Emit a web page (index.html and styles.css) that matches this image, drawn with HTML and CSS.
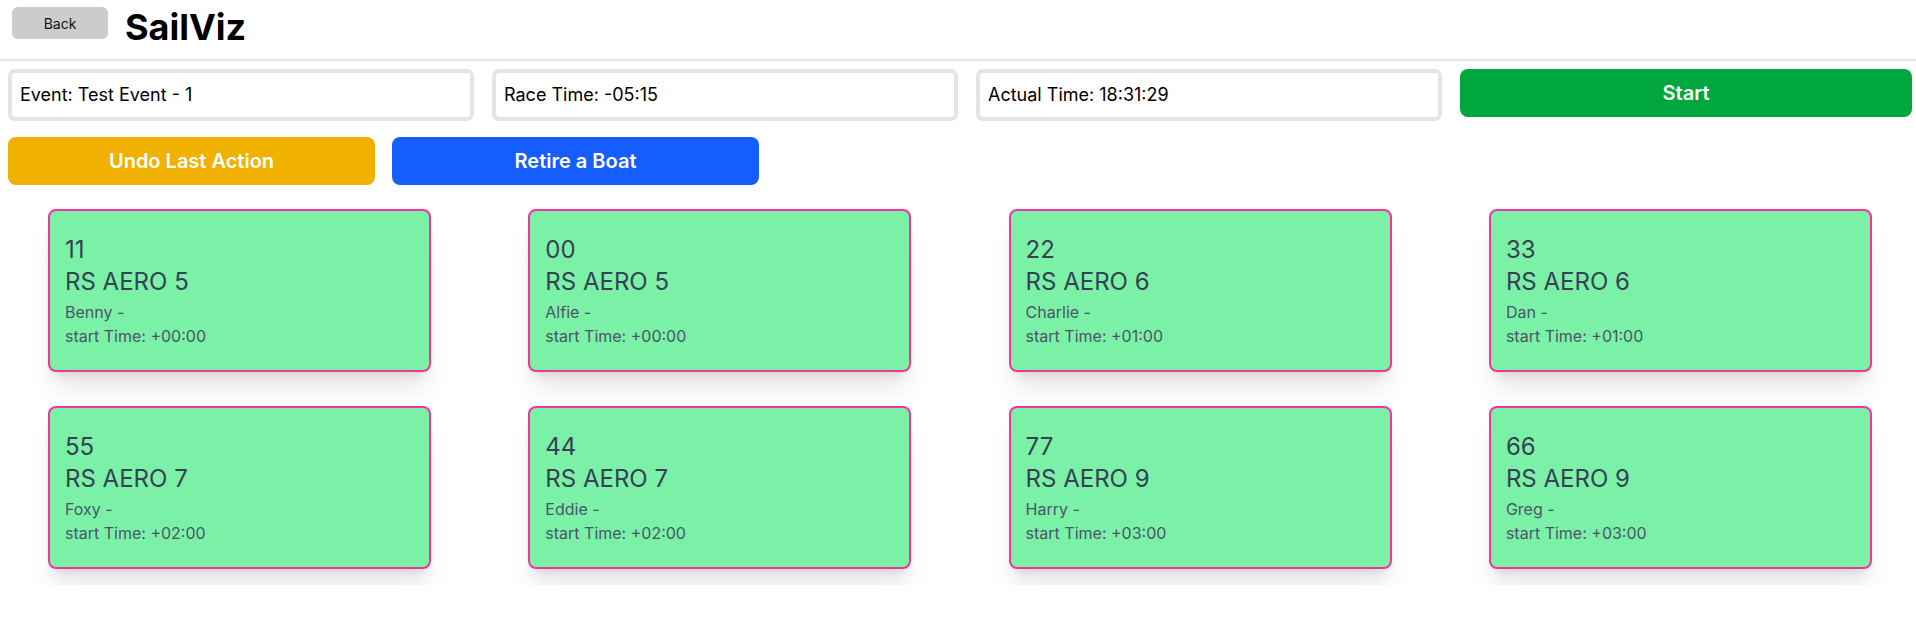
FILE: index.html
```html
<!DOCTYPE html>
<html lang="en">
<head>
<meta charset="utf-8">
<title>SailViz</title>
<link rel="stylesheet" href="styles.css">
</head>
<body>
<header class="topbar">
  <button class="back-btn">Back</button>
  <h1 class="brand">SailViz</h1>
</header>
<section class="info-row">
  <div class="info-box">Event: Test Event - 1</div>
  <div class="info-box">Race Time: -05:15</div>
  <div class="info-box">Actual Time: 18:31:29</div>
  <button class="btn btn-start">Start</button>
</section>
<section class="action-row">
  <button class="btn btn-undo">Undo Last Action</button>
  <button class="btn btn-retire">Retire a Boat</button>
</section>
<main class="boats">
  <div class="boat-grid">
    <div class="boat"><div class="sail">11</div><div class="cls">RS AERO 5</div><div class="helm">Benny -</div><div class="start">start Time: +00:00</div></div>
    <div class="boat"><div class="sail">00</div><div class="cls">RS AERO 5</div><div class="helm">Alfie -</div><div class="start">start Time: +00:00</div></div>
    <div class="boat"><div class="sail">22</div><div class="cls">RS AERO 6</div><div class="helm">Charlie -</div><div class="start">start Time: +01:00</div></div>
    <div class="boat"><div class="sail">33</div><div class="cls">RS AERO 6</div><div class="helm">Dan -</div><div class="start">start Time: +01:00</div></div>
    <div class="boat"><div class="sail">55</div><div class="cls">RS AERO 7</div><div class="helm">Foxy -</div><div class="start">start Time: +02:00</div></div>
    <div class="boat"><div class="sail">44</div><div class="cls">RS AERO 7</div><div class="helm">Eddie -</div><div class="start">start Time: +02:00</div></div>
    <div class="boat"><div class="sail">77</div><div class="cls">RS AERO 9</div><div class="helm">Harry -</div><div class="start">start Time: +03:00</div></div>
    <div class="boat"><div class="sail">66</div><div class="cls">RS AERO 9</div><div class="helm">Greg -</div><div class="start">start Time: +03:00</div></div>
  </div>
</main>
</body>
</html>
```
FILE: styles.css
```css
* { box-sizing: border-box; }
html, body { margin: 0; padding: 0; background: #ffffff; }
body {
  font-family: Inter, "Liberation Sans", sans-serif;
  color: #000;
}
button { font-family: inherit; border: none; cursor: pointer; }

.topbar {
  display: flex;
  align-items: flex-start;
  padding: 7px 12px 12px 12px;
  border-bottom: 2px solid #e5e5e5;
}
.back-btn {
  width: 96px;
  height: 32px;
  background: #cccccc;
  border-radius: 6px;
  font-size: 14px;
  color: #111;
  padding: 0;
}
.brand {
  margin: 0 0 0 17px;
  font-size: 36px;
  line-height: 40px;
  font-weight: 700;
  color: #000;
}

.info-row {
  display: flex;
  align-items: flex-start;
  gap: 18px;
  padding: 0 4px 0 8px;
  margin-top: 8px;
}
.info-box {
  width: 466px;
  flex: none;
  border: 4px solid #e5e5e5;
  border-radius: 7px;
  padding: 10px 8px;
  font-size: 18px;
  line-height: 24px;
  color: #000;
  background: #fff;
}
.btn {
  height: 48px;
  border-radius: 8px;
  color: #fff;
  font-size: 20px;
  font-weight: 600;
}
.btn-start { flex: 1; background: #00a63e; }

.action-row {
  display: flex;
  gap: 17px;
  padding: 0 8px;
  margin-top: 16px;
}
.btn-undo { width: 367px; background: #f0b100; }
.btn-retire { width: 367px; background: #155dfc; }

.boats {
  margin-top: 8px;
  padding: 16px 0 16px 48px;
  overflow: hidden;
}
.boat-grid {
  display: grid;
  grid-template-columns: repeat(4, 383px);
  column-gap: 97.3px;
  row-gap: 34px;
}
.boat {
  background: #7bf1a8;
  border: 2px solid #f6339a;
  border-radius: 8px;
  padding: 23px 14px 22px 15px;
  box-shadow: 0 20px 25px -5px rgba(0,0,0,0.1), 0 8px 10px -6px rgba(0,0,0,0.1);
}
.sail, .cls {
  font-size: 24px;
  line-height: 32px;
  color: #364153;
}
.helm, .start {
  font-size: 16px;
  line-height: 24px;
  color: #4a5565;
}
.helm { margin-top: 2px; }
```
